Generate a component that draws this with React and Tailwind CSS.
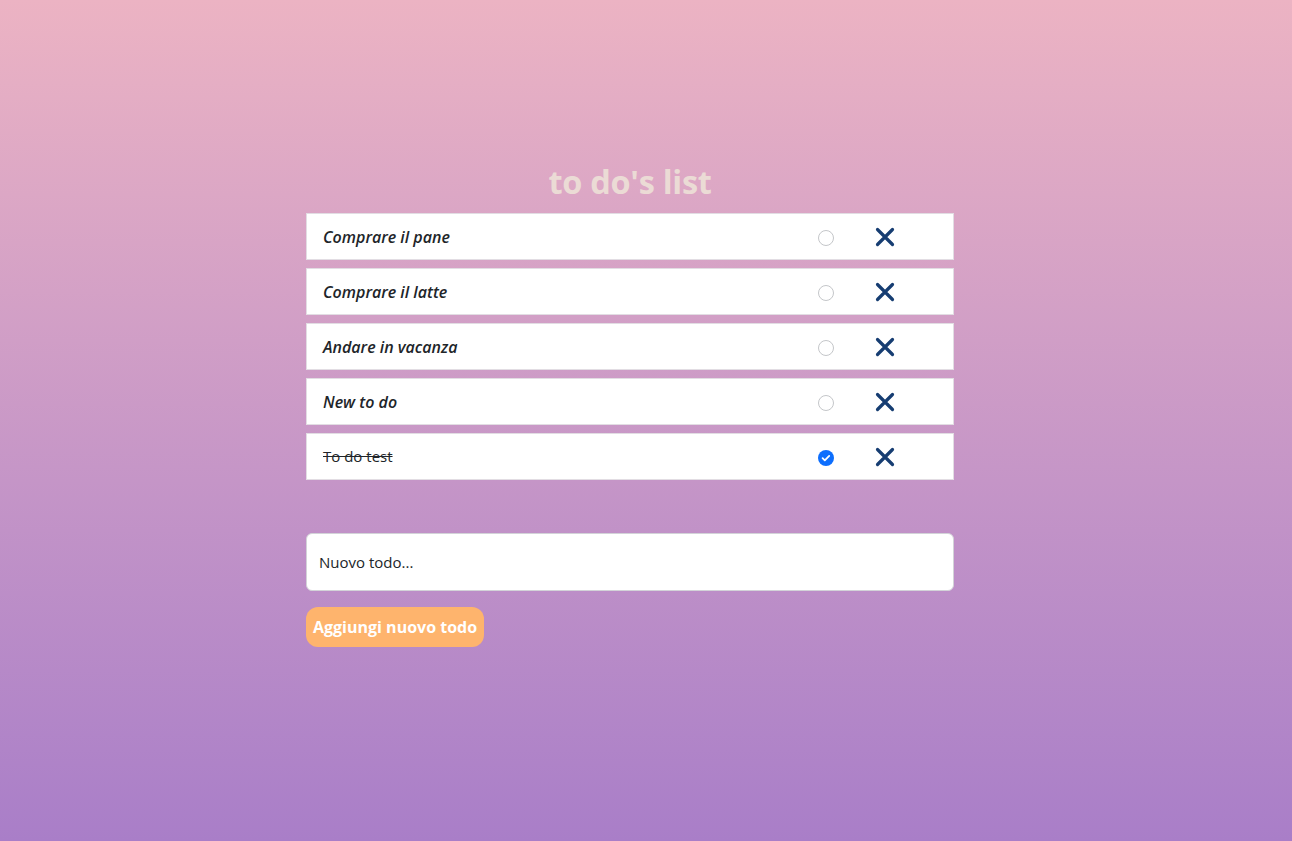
import React, { useState } from 'react';

const initialTodos = [
  { text: 'Comprare il pane', done: false },
  { text: 'Comprare il latte', done: false },
  { text: 'Andare in vacanza', done: false },
  { text: 'New to do', done: false },
  { text: 'To do test', done: true },
];

function Radio({ checked }) {
  if (checked) {
    return (
      <svg width="16" height="16" viewBox="0 0 16 16">
        <circle cx="8" cy="8" r="8" fill="#0d6efd" />
        <path d="M4.6 8.2l2.2 2.1 4.4-4.4" fill="none" stroke="#fff" strokeWidth="1.8" strokeLinecap="round" strokeLinejoin="round" />
      </svg>
    );
  }
  return (
    <svg width="16" height="16" viewBox="0 0 16 16">
      <circle cx="8" cy="8" r="7.5" fill="#fff" stroke="#c4c6c9" strokeWidth="1" />
    </svg>
  );
}

export default function App() {
  const [todos] = useState(initialTodos);

  return (
    <div
      className="min-h-[841px] w-full bg-gradient-to-b from-[#ecb3c3] to-[#a97ec8] pt-[161px] pr-[32px]"
      style={{ fontFamily: '"Open Sans", "Noto Sans", sans-serif' }}
    >
      <div className="mx-auto w-[648px]">
        <h1 className="text-center text-[32.5px] font-bold leading-[42px] text-[#ebdbd5] tracking-[-0.3px]">to do's list</h1>

        {/* list */}
        <ul className="mt-[10px] flex flex-col gap-[8px]">
          {todos.map((t) => (
            <li key={t.text} className="flex h-[47px] items-center border border-[#e2dde3] bg-white pl-[16px]">
              <span
                className={
                  t.done
                    ? 'flex-1 text-[15px] text-[#212529] line-through'
                    : 'flex-1 text-[16px] font-semibold italic text-[#212529]'
                }
              >
                {t.text}
              </span>
              <span className="mt-[3px] flex w-[16px] justify-center">
                <Radio checked={t.done} />
              </span>
              <span className="mt-[1px] ml-[40px] mr-[57px] flex w-[22px] justify-center">
                <svg width="20" height="20" viewBox="0 0 20 20">
                  <path d="M2.5 2.5l15 15M17.5 2.5l-15 15" stroke="#163d72" strokeWidth="3.2" strokeLinecap="round" />
                </svg>
              </span>
            </li>
          ))}
        </ul>

        {/* new todo */}
        <div className="mt-[53px] flex h-[58px] items-center rounded-[6px] border border-[#d3d3d8] bg-white px-[12px]">
          <span className="text-[15px] text-[#212529]">Nuovo todo...</span>
        </div>
        <button className="mt-[16px] h-[40px] rounded-[12px] bg-[#feb46d] px-[7px] text-[16px] font-bold text-white">
          Aggiungi nuovo todo
        </button>
      </div>
    </div>
  );
}
